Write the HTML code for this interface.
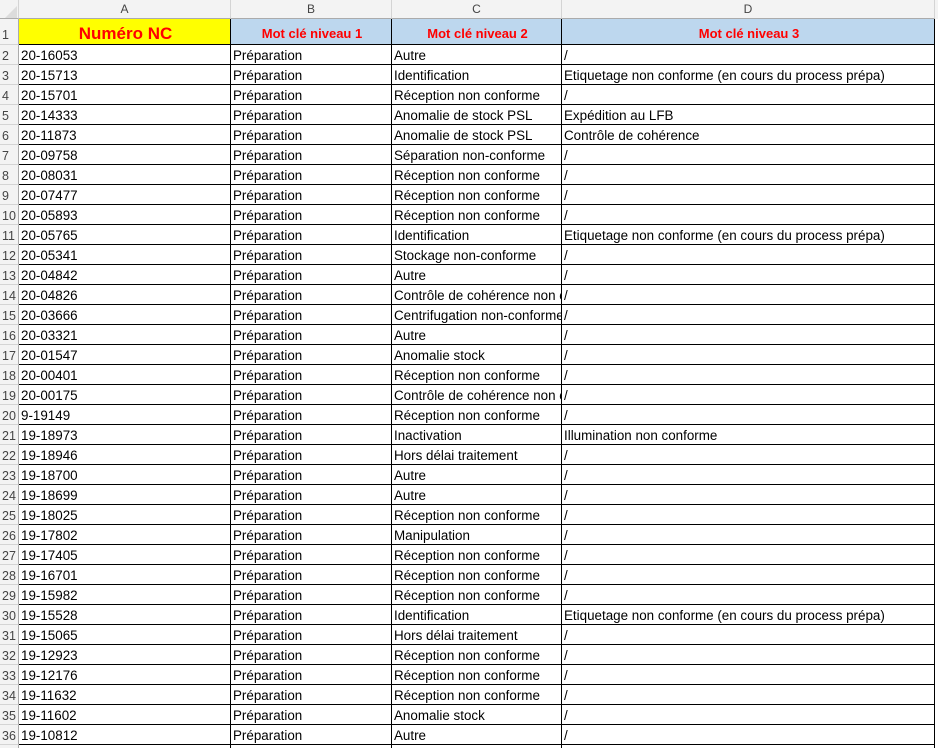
<!DOCTYPE html>
<html><head><meta charset="utf-8"><style>
html,body{margin:0;width:938px;height:748px;overflow:hidden}
body{background:#fff;font-family:"Liberation Sans",sans-serif;position:relative}
.hd{position:absolute;top:0;height:19px;background:#f3f3f3;border-right:1px solid #d4d4d4;border-bottom:1px solid #ababab;box-sizing:border-box;text-align:center;font-size:12px;line-height:19px;color:#444}
.rh{position:absolute;left:0;width:19px;background:#f3f3f3;border-bottom:1px solid #d4d4d4;border-right:1px solid #ababab;box-sizing:border-box;font-size:12.5px;color:#444;padding-left:2px}
.c{position:absolute;box-sizing:border-box;border-right:1px solid #000;border-bottom:1px solid #000;font-size:13.4px;line-height:22px;padding-left:2px;white-space:nowrap;overflow:hidden;color:#000}
.h{font-weight:bold;color:#f00;text-align:center;background:#bdd7ee}
</style></head><body>
<div class="hd" style="left:0;width:19px"></div>
<svg style="position:absolute;left:5px;top:6px" width="12" height="12"><polygon points="12,0 12,12 0,12" fill="#dcdcdc"/></svg>
<div class="hd" style="left:19px;width:212px">A</div>
<div class="hd" style="left:231px;width:161px">B</div>
<div class="hd" style="left:392px;width:170px">C</div>
<div class="hd" style="left:562px;width:373px">D</div>
<div class="hd" style="left:935px;width:3px;border:none"></div>
<div id="g"></div>
<script>
var rows=[
["20-16053","Autre","/"],["20-15713","Identification","Etiquetage non conforme (en cours du process prépa)"],["20-15701","Réception non conforme","/"],["20-14333","Anomalie de stock PSL","Expédition au LFB"],["20-11873","Anomalie de stock PSL","Contrôle de cohérence"],["20-09758","Séparation non-conforme","/"],["20-08031","Réception non conforme","/"],["20-07477","Réception non conforme","/"],["20-05893","Réception non conforme","/"],["20-05765","Identification","Etiquetage non conforme (en cours du process prépa)"],["20-05341","Stockage non-conforme","/"],["20-04842","Autre","/"],["20-04826","Contrôle de cohérence non conforme","/"],["20-03666","Centrifugation non-conforme","/"],["20-03321","Autre","/"],["20-01547","Anomalie stock","/"],["20-00401","Réception non conforme","/"],["20-00175","Contrôle de cohérence non conforme","/"],["9-19149","Réception non conforme","/"],["19-18973","Inactivation","Illumination non conforme"],["19-18946","Hors délai traitement","/"],["19-18700","Autre","/"],["19-18699","Autre","/"],["19-18025","Réception non conforme","/"],["19-17802","Manipulation","/"],["19-17405","Réception non conforme","/"],["19-16701","Réception non conforme","/"],["19-15982","Réception non conforme","/"],["19-15528","Identification","Etiquetage non conforme (en cours du process prépa)"],["19-15065","Hors délai traitement","/"],["19-12923","Réception non conforme","/"],["19-12176","Réception non conforme","/"],["19-11632","Réception non conforme","/"],["19-11602","Anomalie stock","/"],["19-10812","Autre","/"]];
var h='';
h+='<div class="rh" style="top:19px;height:26px;line-height:32px">1</div>';
h+='<div class="c h" style="left:19px;top:19px;width:212px;height:26px;background:#ff0;font-size:17px;line-height:30px">Numéro NC</div>';
h+='<div class="c h" style="left:231px;top:19px;width:161px;height:26px;line-height:29px;font-size:13px">Mot clé niveau 1</div>';
h+='<div class="c h" style="left:392px;top:19px;width:170px;height:26px;line-height:29px;font-size:13px">Mot clé niveau 2</div>';
h+='<div class="c h" style="left:562px;top:19px;width:373px;height:26px;line-height:29px;font-size:13px">Mot clé niveau 3</div>';
for(var i=0;i<rows.length;i++){var t=45+i*20,r=rows[i];
h+='<div class="rh" style="top:'+t+'px;height:20px;line-height:23px">'+(i+2)+'</div>';
h+='<div class="c" style="left:19px;top:'+t+'px;width:212px;height:20px">'+r[0]+'</div>';
h+='<div class="c" style="left:231px;top:'+t+'px;width:161px;height:20px">Préparation</div>';
h+='<div class="c" style="left:392px;top:'+t+'px;width:170px;height:20px">'+r[1]+'</div>';
h+='<div class="c" style="left:562px;top:'+t+'px;width:373px;height:20px">'+r[2]+'</div>';}
h+='<div class="rh" style="top:745px;height:3px;border-bottom:none"></div>';
h+='<div class="c" style="left:19px;top:745px;width:212px;height:3px;border-bottom:none"></div><div class="c" style="left:231px;top:745px;width:161px;height:3px;border-bottom:none"></div><div class="c" style="left:392px;top:745px;width:170px;height:3px;border-bottom:none"></div><div class="c" style="left:562px;top:745px;width:373px;height:3px;border-bottom:none"></div>';
document.getElementById('g').innerHTML=h;
</script>
</body></html>
